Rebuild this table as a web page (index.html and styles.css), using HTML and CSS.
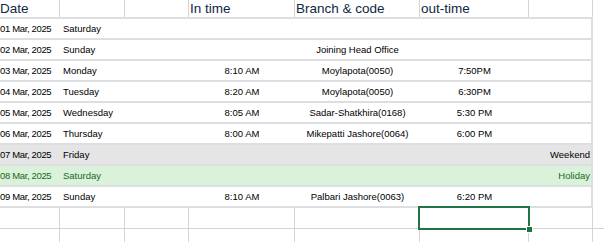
FILE: index.html
```html
<!DOCTYPE html>
<html>
<head>
<meta charset="utf-8">
<link rel="stylesheet" href="styles.css">
</head>
<body>
<div class="sheet">
  <div class="hrow">
    <div class="hc">Date</div>
    <div class="hc"></div>
    <div class="hc"></div>
    <div class="hc">In time</div>
    <div class="hc">Branch &amp; code</div>
    <div class="hc">out-time</div>
    <div class="hc"></div>
    <div class="hc last"></div>
  </div>
  <div class="data">
    <div class="drow"><span class="date">01 Mar, 2025</span><span class="day">Saturday</span><span></span><span class="c"></span><span class="c"></span><span class="c"></span><span class="r"></span></div>
    <div class="drow"><span class="date">02 Mar, 2025</span><span class="day">Sunday</span><span></span><span class="c"></span><span class="c">Joining Head Office</span><span class="c"></span><span class="r"></span></div>
    <div class="drow"><span class="date">03 Mar, 2025</span><span class="day">Monday</span><span></span><span class="c">8:10 AM</span><span class="c">Moylapota(0050)</span><span class="c">7:50PM</span><span class="r"></span></div>
    <div class="drow"><span class="date">04 Mar, 2025</span><span class="day">Tuesday</span><span></span><span class="c">8:20 AM</span><span class="c">Moylapota(0050)</span><span class="c">6:30PM</span><span class="r"></span></div>
    <div class="drow"><span class="date">05 Mar, 2025</span><span class="day">Wednesday</span><span></span><span class="c">8:05 AM</span><span class="c">Sadar-Shatkhira(0168)</span><span class="c">5:30 PM</span><span class="r"></span></div>
    <div class="drow"><span class="date">06 Mar, 2025</span><span class="day">Thursday</span><span></span><span class="c">8:00 AM</span><span class="c">Mikepatti Jashore(0064)</span><span class="c">6:00 PM</span><span class="r"></span></div>
    <div class="drow weekend"><span class="date">07 Mar, 2025</span><span class="day">Friday</span><span></span><span class="c"></span><span class="c"></span><span class="c"></span><span class="r">Weekend</span></div>
    <div class="drow holiday"><span class="date">08 Mar, 2025</span><span class="day">Saturday</span><span></span><span class="c"></span><span class="c"></span><span class="c"></span><span class="r">Holiday</span></div>
    <div class="drow"><span class="date">09 Mar, 2025</span><span class="day">Sunday</span><span></span><span class="c">8:10 AM</span><span class="c">Palbari Jashore(0063)</span><span class="c">6:20 PM</span><span class="r"></span></div>
  </div>
  <div class="erow">
    <div class="ec"></div><div class="ec"></div><div class="ec"></div><div class="ec"></div><div class="ec"></div>
    <div class="ec selected"><div class="sel"><div class="handle"></div></div></div>
    <div class="ec"></div><div class="ec last"></div>
  </div>
  <div class="erow">
    <div class="ec"></div><div class="ec"></div><div class="ec"></div><div class="ec"></div><div class="ec"></div>
    <div class="ec"></div><div class="ec"></div><div class="ec last"></div>
  </div>
</div>
</body>
</html>
```

FILE: styles.css
```css
html, body {
  margin: 0;
  padding: 0;
  background: #ffffff;
  overflow: hidden;
}
.sheet {
  width: 604px;
  height: 242px;
  overflow: hidden;
  display: flex;
  flex-direction: column;
}
.hrow, .erow {
  display: grid;
  grid-template-columns: 60px 65px 64px 106px 125px 109px 64px 1fr;
  flex: none;
}
.hrow {
  height: 17px;
}
.hc {
  border-right: 1px solid #d4d4d4;
  font-family: "Liberation Sans", Arial, sans-serif;
  font-size: 13.5px;
  line-height: 18px;
  color: #0e2841;
  padding-left: 1px;
  white-space: nowrap;
  overflow: visible;
}
.hc:first-child {
  padding-left: 0;
}
.hc.last, .ec.last {
  border-right: none;
}
.data {
  width: 593px;
  box-sizing: border-box;
  border-top: 2px solid #dcdee1;
  border-right: 2px solid #dcdee1;
  flex: none;
}
.drow {
  display: grid;
  grid-template-columns: 60px 65px 64px 106px 125px 109px 62px;
  height: 19px;
  border-bottom: 2px solid #dcdee1;
  font-family: "Liberation Sans", Arial, sans-serif;
  font-size: 9.5px;
  line-height: 19px;
  color: #000000;
  white-space: nowrap;
}
.drow > span {
  overflow: visible;
}
.drow .date {
  letter-spacing: -0.35px;
}
.drow .day {
  padding-left: 3px;
}
.drow .c {
  text-align: center;
}
.drow .r {
  text-align: right;
  padding-right: 1px;
}
.drow.weekend {
  background: #e5e5e5;
}
.drow.holiday {
  background: #daf1da;
  color: #186a1b;
}
.erow {
  height: 21px;
}
.ec {
  border-right: 1px solid #d4d4d4;
  border-bottom: 1px solid #d4d4d4;
}
.ec.selected {
  position: relative;
}
.sel {
  position: absolute;
  left: -2px;
  top: -2px;
  right: -2px;
  bottom: -2px;
  border: 2px solid #217346;
}
.handle {
  position: absolute;
  right: -5px;
  bottom: -5px;
  width: 5px;
  height: 5px;
  background: #217346;
  border: 1px solid #ffffff;
}
```
